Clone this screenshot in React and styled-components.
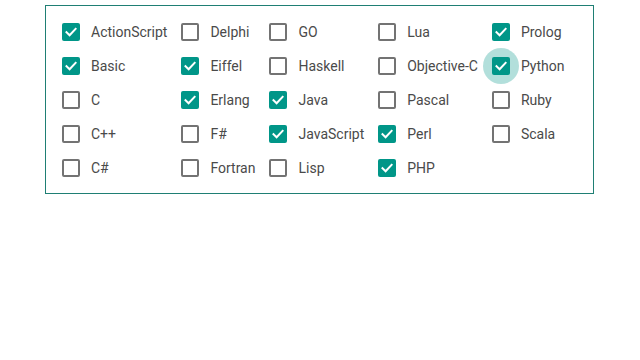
import React from "react";
import styled, { createGlobalStyle } from "styled-components";

const Global = createGlobalStyle`
  html, body { margin: 0; padding: 0; background: #fff; }
  body { font-family: Roboto, "Liberation Sans", sans-serif; }
`;

const Page = styled.div`
  padding: 5px 0 0 45px;
`;

const Panel = styled.div`
  box-sizing: border-box;
  width: 549px;
  height: 189px;
  border: 1px solid #1f7f74;
  padding: 9px 0 0 16px;
  display: grid;
  grid-auto-flow: column;
  grid-template-rows: repeat(5, 34px);
  grid-auto-columns: max-content;
  justify-content: start;
`;

const Item = styled.label`
  display: flex;
  align-items: center;
  gap: 11px;
  padding-right: 14px;
  height: 34px;
  cursor: pointer;
`;

const BoxWrap = styled.span`
  position: relative;
  width: 18px;
  height: 18px;
  flex: none;
`;

const Ripple = styled.span`
  position: absolute;
  left: -9px;
  top: -9px;
  width: 36px;
  height: 36px;
  border-radius: 50%;
  background: rgba(0, 150, 136, 0.3);
`;

const Box = styled.span`
  position: relative;
  box-sizing: border-box;
  display: flex;
  align-items: center;
  justify-content: center;
  width: 18px;
  height: 18px;
  border-radius: 2px;
  border: ${(p) => (p.$checked ? "none" : "2px solid #737373")};
  background: ${(p) => (p.$checked ? "#009688" : "#fff")};
`;

const Label = styled.span`
  font-size: 14px;
  color: #4a4a4a;
  white-space: nowrap;
`;

const Check = () => (
  <svg width="14" height="14" viewBox="0 0 14 14">
    <path d="M2.5 7.2 L5.6 10.2 L11.6 3.8" fill="none" stroke="#fff" strokeWidth="2" strokeLinecap="square" />
  </svg>
);

const langs = [
  ["ActionScript", true], ["Basic", true], ["C", false], ["C++", false], ["C#", false],
  ["Delphi", false], ["Eiffel", true], ["Erlang", true], ["F#", false], ["Fortran", false],
  ["GO", false], ["Haskell", false], ["Java", true], ["JavaScript", true], ["Lisp", false],
  ["Lua", false], ["Objective-C", false], ["Pascal", false], ["Perl", true], ["PHP", true],
  ["Prolog", true], ["Python", true, true], ["Ruby", false], ["Scala", false],
];

export default function App() {
  return (
    <Page>
      <Global />
      <Panel>
        {langs.map(([name, checked, focus]) => (
          <Item key={name}>
            <BoxWrap>
              {focus && <Ripple />}
              <Box $checked={checked}>{checked && <Check />}</Box>
            </BoxWrap>
            <Label>{name}</Label>
          </Item>
        ))}
      </Panel>
    </Page>
  );
}
